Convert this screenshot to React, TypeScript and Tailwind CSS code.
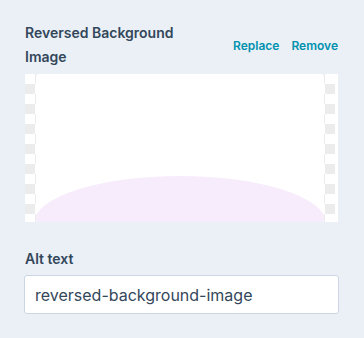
import React from "react";

export default function App() {
  return (
    <div className="w-[364px] h-[338px] bg-[#eaf0f6] pl-6 pt-[21px] font-['Inter',sans-serif] text-[#33475b]">
      <div className="flex w-[314px] items-center justify-between">
        <div className="w-[175px] pl-px text-[14px] font-semibold leading-6">
          Reversed Background Image
        </div>
        <div className="flex gap-3 pt-[1px] text-[12px] font-semibold text-[#0091ae]">
          <span>Replace</span>
          <span>Remove</span>
        </div>
      </div>
      <div className="mt-[5px] ml-px flex h-[148px] w-[313px]">
        <div className="flex h-full w-[310px] bg-[conic-gradient(#ececec_25%,#ffffff_0_50%,#ececec_0_75%,#ffffff_0)] bg-[length:20px_20px]">
          <div className="ml-[11px] h-full w-[288px] overflow-hidden rounded-t-[3px] bg-white">
            <svg width="288" height="148" viewBox="0 0 288 148">
              <ellipse cx="144" cy="149" rx="146" ry="47" fill="#f7ecfc" />
            </svg>
          </div>
        </div>
        <div className="h-full w-[3px] bg-white" />
      </div>
      <div className="mt-[27px] pl-px text-[14px] font-semibold leading-5">Alt text</div>
      <div className="mt-[6px] flex h-[39px] w-[315px] items-center rounded-[3px] border border-[#cbd6e2] bg-white pl-[10px] text-[16px]">
        reversed-background-image
      </div>
    </div>
  );
}
